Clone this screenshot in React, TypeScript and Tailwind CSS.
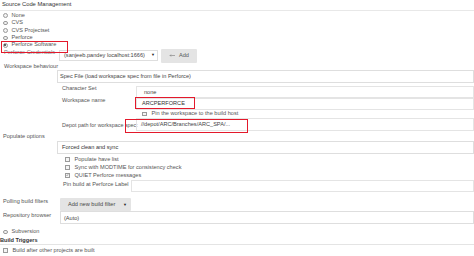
import React from 'react';

function Radio({ label, checked = false }: { label: string; checked?: boolean }) {
  return (
    <div className="flex h-[7.4px] items-center gap-[4px] pl-[3px]">
      <span className="flex h-[4.5px] w-[4.5px] items-center justify-center rounded-full border-[0.6px] border-[#9a9a9a] bg-[#f2f2f2]">
        {checked && <span className="h-[2px] w-[2px] rounded-full bg-[#333]" />}
      </span>
      <span>{label}</span>
    </div>
  );
}

function Check({ label, checked = false }: { label: string; checked?: boolean }) {
  return (
    <div className="flex h-[8px] items-center gap-[5px] whitespace-nowrap">
      <span className="flex h-[4.5px] w-[4.5px] items-center justify-center border-[0.6px] border-[#9a9a9a] bg-[#f4f4f4]">
        {checked && (
          <svg viewBox="0 0 8 8" className="h-[4px] w-[4px]">
            <path d="M1.5 4.2 L3.3 6 L6.7 1.8" fill="none" stroke="#222" strokeWidth="1.4" />
          </svg>
        )}
      </span>
      <span>{label}</span>
    </div>
  );
}

function Caret() {
  return <span className="text-[4px] text-[#222]">▼</span>;
}

export default function App() {
  return (
    <div className="relative h-[256px] w-[474px] overflow-hidden whitespace-nowrap bg-white font-['Liberation_Sans',Arial,sans-serif] text-[5.6px] leading-none text-[#555]">
      <div className="flex h-[11px] items-center border-b border-[#e8e8e8] pl-[2px] text-[5.8px] text-[#333]">
        Source Code Management
      </div>

      <div className="flex flex-col pt-[1px]">
        <Radio label="None" />
        <Radio label="CVS" />
        <Radio label="CVS Projectset" />
        <Radio label="Perforce" />
        <Radio label="Perforce Software" checked />
      </div>

      {/* credentials */}
      <div className="flex h-[15px] items-start">
        <div className="w-[59px] pl-[4px] leading-[7px] text-[#777]">Perforce Credentials</div>
        <div className="mt-[1px] flex h-[11px] w-[99px] items-center justify-between border border-[#dedede] pl-[4px] pr-[2px] text-[#444]">
          <span>(sanjeeb.pandey localhost:1666)</span>
          <Caret />
        </div>
        <div className="ml-[3px] flex h-[14px] w-[36px] items-center justify-center gap-[3px] rounded-[1px] bg-[#e4e4e4] text-[#555]">
          <svg viewBox="0 0 12 6" className="h-[3px] w-[7px]">
            <path d="M1 3 L3 1 M1 3 L3 5 M1 3 H11" fill="none" stroke="#666" strokeWidth="1" />
          </svg>
          <span>Add</span>
        </div>
      </div>

      <div className="flex h-[6px] items-center pl-[4px]">Workspace behaviour</div>
      <div className="ml-[57px] flex h-[13px] items-center border border-[#dedede] pl-[2px] text-[#444]">
        Spec File (load workspace spec from file in Perforce)
      </div>

      <div className="mt-[3px] flex flex-col pl-[62px]">
        <div className="flex h-[12px] items-start">
          <div className="w-[74px] pt-[0.5px] leading-[4px]">Character Set</div>
          <div className="flex h-full flex-1 items-start border border-[#e4e4e4] pl-[7px] pt-[3px] text-[#444]">none</div>
        </div>
        <div className="flex h-[12px] items-start">
          <div className="w-[74px] pt-[0.5px] leading-[5px]">Workspace name</div>
          <div className="flex h-full flex-1 items-center border border-[#e4e4e4] pl-[5px] text-[#333]">ARCPERFORCE</div>
        </div>
        <div className="flex h-[8.5px] items-center pl-[80px]">
          <Check label="Pin the workspace to the build host" />
        </div>
        <div className="flex h-[13px] items-center">
          <div className="w-[74px] text-[5.4px] leading-[6px]">Depot path for workspace spec:</div>
          <div className="flex h-full flex-1 items-center border border-[#e4e4e4] pl-[4px] text-[#444]">
            //depot/ARC/Branches/ARC_SPA/...
          </div>
        </div>
      </div>

      <div className="flex h-[10px] items-center pl-[3px]">Populate options</div>
      <div className="ml-[57px] flex h-[13px] items-center border border-[#dedede] pl-[4px] text-[#333]">
        Forced clean and sync
      </div>

      <div className="mt-[1px] flex flex-col pl-[65px]">
        <Check label="Populate have list" />
        <Check label="Sync with MODTIME for consistency check" />
        <Check label="QUIET Perforce messages" checked />
      </div>

      <div className="mt-[1px] flex h-[12px] items-start pl-[63px]">
        <div className="w-[68px] pt-[1px] leading-[6px]">Pin build at Perforce Label</div>
        <div className="h-full flex-1 border border-[#e4e4e4]" />
      </div>

      <div className="flex h-[19px] items-start pt-[6px]">
        <div className="w-[60px] pl-[3px] leading-[7px]">Polling build filters</div>
        <div className="flex h-[13px] w-[71px] items-center justify-between rounded-[1px] bg-[#e4e4e4] pl-[8px] pr-[4px] text-[#444]">
          <span>Add new build filter</span>
          <Caret />
        </div>
      </div>

      <div className="flex h-[13px] items-start">
        <div className="w-[60px] pl-[3px] pt-[0.5px] leading-[6px]">Repository browser</div>
        <div className="flex h-full flex-1 items-center border border-[#dedede] pl-[3px] pt-[1px] text-[#444]">(Auto)</div>
      </div>

      <div className="mt-[3px] flex h-[9px] items-center">
        <Radio label="Subversion" />
      </div>

      <div className="flex h-[9px] items-start border-b border-[#e4e4e4] pt-[1px] font-bold leading-[6px] text-[#333]">
        Build Triggers
      </div>

      <div className="flex h-[10px] items-center pl-[3px]">
        <Check label="Build after other projects are built" />
      </div>

      {/* annotation boxes */}
      <div className="absolute left-[1px] top-[41px] h-[12px] w-[67px] border-[1.5px] border-[#e3192b]" />
      <div className="absolute left-[135px] top-[97px] h-[12px] w-[60px] border-[1.5px] border-[#e3192b]" />
      <div className="absolute left-[125px] top-[119px] h-[14px] w-[123px] border-[1.5px] border-[#e3192b]" />
    </div>
  );
}
